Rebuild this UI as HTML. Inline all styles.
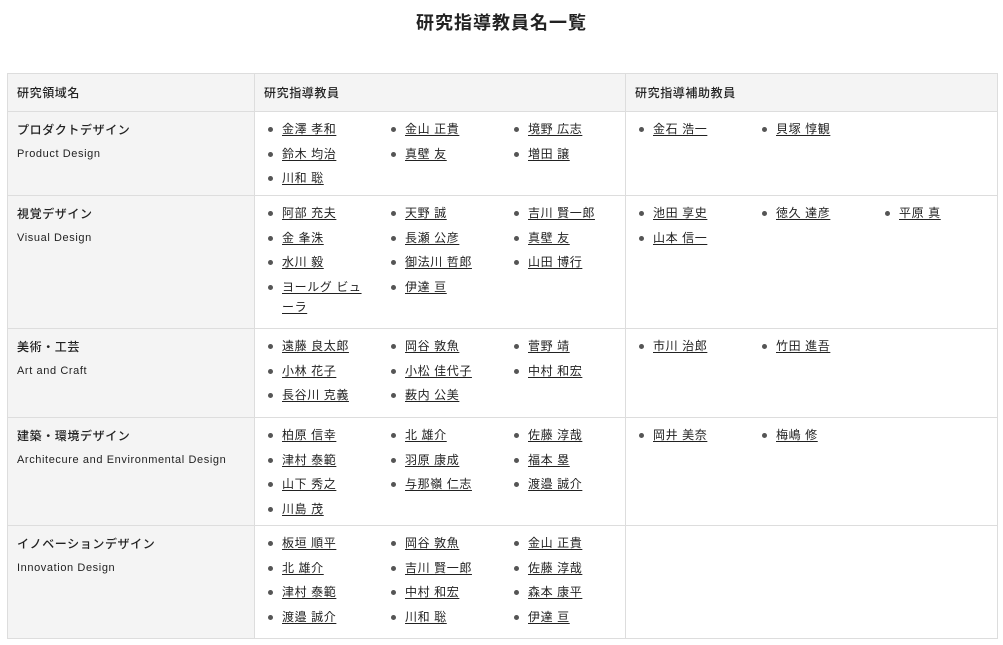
<!DOCTYPE html>
<html><head><meta charset="utf-8">
<style>
*{margin:0;padding:0;box-sizing:border-box}
body{width:1003px;height:645px;background:#fff;font-family:"Liberation Sans","Noto Sans CJK JP",sans-serif;color:#222;overflow:hidden}
h1{position:absolute;top:9px;left:0;width:1003px;text-align:center;font-size:18px;font-weight:bold;letter-spacing:1px;color:#222;font-family:"Noto Sans CJK JP",sans-serif}
table{position:absolute;top:73px;left:7px;width:990px;border-collapse:collapse;font-size:12px;letter-spacing:0.6px;table-layout:fixed}
td,th{border:1px solid #ddd;vertical-align:top;text-align:left;font-weight:normal;overflow:visible}
th{background:#f4f4f4;height:38px;padding:0 9px;vertical-align:middle;font-size:12px;font-weight:500}
td.n{background:#f4f4f4;padding:6px 9px;line-height:24px}
td.n b{font-weight:500;font-size:12px;display:block}
td.n span{font-size:11px;letter-spacing:0.6px;display:block;line-height:24px}
ul{list-style:none;display:grid;grid-template-columns:123px 123px 123px;padding:7px 0 0 9px}
li{padding-left:18px;padding-right:20px;position:relative;line-height:20px;margin-bottom:4.5px}
li:before{content:"";position:absolute;left:4px;top:8px;width:5px;height:5px;border-radius:50%;background:#555}
li u{text-decoration:underline;text-underline-offset:2px;color:#222}
</style></head><body>
<h1>研究指導教員名一覧</h1>
<table>
<colgroup><col style="width:247px"><col style="width:371px"><col style="width:372px"></colgroup>
<tr><th>研究領域名</th><th>研究指導教員</th><th>研究指導補助教員</th></tr>
<tr style="height:84px"><td class="n"><b>プロダクトデザイン</b><span>Product Design</span></td>
<td><ul><li><u>金澤 孝和</u></li><li><u>金山 正貴</u></li><li><u>境野 広志</u></li><li><u>鈴木 均治</u></li><li><u>真壁 友</u></li><li><u>増田 譲</u></li><li><u>川和 聡</u></li></ul></td>
<td><ul><li><u>金石 浩一</u></li><li><u>貝塚 惇観</u></li></ul></td></tr>
<tr style="height:133px"><td class="n"><b>視覚デザイン</b><span>Visual Design</span></td>
<td><ul><li><u>阿部 充夫</u></li><li><u>天野 誠</u></li><li><u>吉川 賢一郎</u></li><li><u>金 夆洙</u></li><li><u>長瀬 公彦</u></li><li><u>真壁 友</u></li><li><u>水川 毅</u></li><li><u>御法川 哲郎</u></li><li><u>山田 博行</u></li><li><u>ヨールグ ビューラ</u></li><li><u>伊達 亘</u></li></ul></td>
<td><ul><li><u>池田 享史</u></li><li><u>徳久 達彦</u></li><li><u>平原 真</u></li><li><u>山本 信一</u></li></ul></td></tr>
<tr style="height:89px"><td class="n"><b>美術・工芸</b><span>Art and Craft</span></td>
<td><ul><li><u>遠藤 良太郎</u></li><li><u>岡谷 敦魚</u></li><li><u>菅野 靖</u></li><li><u>小林 花子</u></li><li><u>小松 佳代子</u></li><li><u>中村 和宏</u></li><li><u>長谷川 克義</u></li><li><u>薮内 公美</u></li></ul></td>
<td><ul><li><u>市川 治郎</u></li><li><u>竹田 進吾</u></li></ul></td></tr>
<tr style="height:108px"><td class="n"><b>建築・環境デザイン</b><span>Architecure and Environmental Design</span></td>
<td><ul><li><u>柏原 信幸</u></li><li><u>北 雄介</u></li><li><u>佐藤 淳哉</u></li><li><u>津村 泰範</u></li><li><u>羽原 康成</u></li><li><u>福本 塁</u></li><li><u>山下 秀之</u></li><li><u>与那嶺 仁志</u></li><li><u>渡邉 誠介</u></li><li><u>川島 茂</u></li></ul></td>
<td><ul><li><u>岡井 美奈</u></li><li><u>梅嶋 修</u></li></ul></td></tr>
<tr style="height:113px"><td class="n"><b>イノベーションデザイン</b><span>Innovation Design</span></td>
<td><ul><li><u>板垣 順平</u></li><li><u>岡谷 敦魚</u></li><li><u>金山 正貴</u></li><li><u>北 雄介</u></li><li><u>吉川 賢一郎</u></li><li><u>佐藤 淳哉</u></li><li><u>津村 泰範</u></li><li><u>中村 和宏</u></li><li><u>森本 康平</u></li><li><u>渡邉 誠介</u></li><li><u>川和 聡</u></li><li><u>伊達 亘</u></li></ul></td>
<td></td></tr>
</table>
</body></html>
